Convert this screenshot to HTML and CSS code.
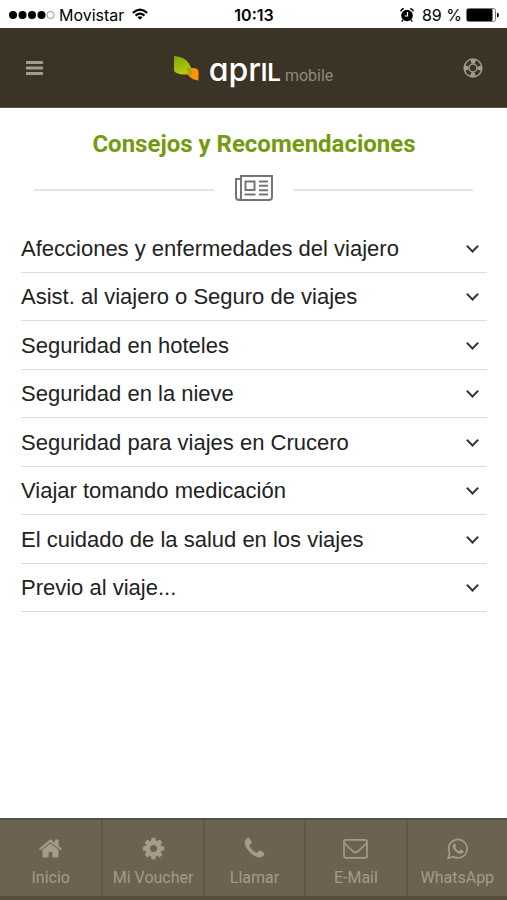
FILE: index.html
```html
<!DOCTYPE html>
<html lang="es">
<head>
    <meta charset="UTF-8">
    <meta name="viewport" content="width=device-width, initial-scale=1.0">
    <title>April mobile</title>
    <link rel="stylesheet" href="styles.css">
</head>
<body>
    <div class="status-bar">
        <div class="status-left">
            <svg class="signal" width="46" height="10" viewBox="0 0 46 10">
                <circle cx="4" cy="5" r="4"/>
                <circle cx="13.5" cy="5" r="4"/>
                <circle cx="23" cy="5" r="4"/>
                <circle cx="32.5" cy="5" r="4"/>
                <circle cx="41.5" cy="5" r="3.6" fill="none" stroke="#888" stroke-width="0.9"/>
            </svg>
            <span>Movistar</span>
            <svg class="wifi" width="16" height="13" viewBox="0 0 18 14" fill="none" stroke="#000" stroke-width="2.4">
                <path d="M1 5.2Q9-2.2 17 5.2M4 8.3Q9 3.8 14 8.3"/>
                <path d="M9 13L6.2 10.2Q9 8 11.8 10.2z" fill="#000" stroke="none"/>
            </svg>
        </div>
        <div class="status-time">10:13</div>
        <div class="status-right">
            <svg width="14" height="14" viewBox="0 0 14 14">
                <circle cx="7" cy="7.5" r="5.8"/>
                <path d="M.8 3.5Q1.2 1 3.8.8M10.2.8Q12.8 1 13.2 3.5M3 12l-1.2 1.5M11 12l1.2 1.5" fill="none" stroke="#000" stroke-width="1.4"/>
                <path d="M7.5 4v4H4.6" fill="none" stroke="#fff" stroke-width="1.2"/>
            </svg>
            <span class="battery-text">89 %</span>
            <svg width="33" height="14" viewBox="0 0 33 14">
                <rect x=".5" y=".5" width="29" height="13" rx="2" fill="#fff" stroke="#777"/>
                <rect x="1" y="1" width="25.5" height="12" rx="1"/>
                <path d="M31 4.5q2 .5 2 2.5t-2 2.5z"/>
            </svg>
        </div>
    </div>

    <header class="header">
        <button class="icon-button" type="button" aria-label="Menú">
            <svg width="18" height="16" viewBox="0 0 18 16" fill="currentColor">
                <rect x="0" y="1" width="17" height="3" rx=".5"/>
                <rect x="0" y="6.5" width="17" height="3" rx=".5"/>
                <rect x="0" y="12" width="17" height="3" rx=".5"/>
            </svg>
        </button>
        <a class="logo" href="#">
            <svg class="logo-leaves" width="25" height="26" viewBox="0 0 25 26">
                <defs>
                    <linearGradient id="leaf" x1="0" y1="0" x2="0.3" y2="1">
                        <stop offset="0" stop-color="#79a80b"/>
                        <stop offset="1" stop-color="#b4cc0b"/>
                    </linearGradient>
                </defs>
                <path d="M0 0Q15 1 17.5 14l-1.5 4.5H8Q0 17 0 14z" fill="url(#leaf)"/>
                <path d="M24.5 24.5V15q-1-3-5-3h-7q0 11 12 12.5z" fill="#f7930d"/>
                <path d="M12.5 12h4q3 4 .5 7.5Q13 17 12.5 12z" fill="#a9a508"/>
            </svg>
            <span class="logo-name">apr<span class="logo-caps">il</span></span>
            <span class="logo-mobile">mobile</span>
        </a>
        <button class="icon-button" type="button" aria-label="Ayuda">
            <svg width="20" height="20" viewBox="0 0 20 20" fill="none" stroke="currentColor">
                <circle cx="10" cy="10" r="8.9" stroke-width="1.5"/>
                <circle cx="10" cy="10" r="4" stroke-width="1.5"/>
                <circle cx="10" cy="10" r="6.6" stroke-width="4" stroke-dasharray="4.4 5.967" stroke-dashoffset="2.2"/>
            </svg>
        </button>
    </header>

    <main class="content">
        <h1 class="title">Consejos y Recomendaciones</h1>
        <div class="divider">
            <svg width="38" height="26" viewBox="0 0 38 26" fill="none" stroke="#757575" stroke-width="2">
                <path d="M6 1h31v21q0 3-3 3H4q-3 0-3-3V4h5zM6 4v18q0 3-2 3"/>
                <path d="M10.5 6.5h9v8.5h-9zM9.5 19.5h11M24 6.5h9M24 10.8h9M24 15.2h9M24 19.5h9"/>
            </svg>
        </div>

        <ul class="topics">
            <li><button class="topic" type="button">Afecciones y enfermedades del viajero</button></li>
            <li><button class="topic" type="button">Asist. al viajero o Seguro de viajes</button></li>
            <li><button class="topic" type="button">Seguridad en hoteles</button></li>
            <li><button class="topic" type="button">Seguridad en la nieve</button></li>
            <li><button class="topic" type="button">Seguridad para viajes en Crucero</button></li>
            <li><button class="topic" type="button">Viajar tomando medicación</button></li>
            <li><button class="topic" type="button">El cuidado de la salud en los viajes</button></li>
            <li><button class="topic" type="button">Previo al viaje...</button></li>
        </ul>
    </main>

    <nav class="tabs">
        <a class="tab" href="#">
            <svg width="25" height="25" viewBox="0 0 1792 1792" fill="currentColor"><path d="M1472 992v480q0 26-19 45t-45 19h-384v-384h-256v384h-384q-26 0-45-19t-19-45v-480q0-1 .5-3t.5-3l575-474 575 474q1 2 1 6zm223-69l-62 74q-8 9-21 11h-3q-13 0-21-7l-692-577-692 577q-12 8-24 7-13-2-21-11l-62-74q-8-10-7-23.5t11-21.5l719-599q32-26 76-26t76 26l244 204v-195q0-14 9-23t23-9h192q14 0 23 9t9 23v408l219 182q10 8 11 21.5t-7 23.5z"/></svg>
            <span>Inicio</span>
        </a>
        <a class="tab" href="#">
            <svg width="25" height="25" viewBox="0 0 1792 1792" fill="currentColor"><path d="M1152 896q0-106-75-181t-181-75-181 75-75 181 75 181 181 75 181-75 75-181zm512-109v222q0 12-8 23t-20 13l-185 28q-19 54-39 91 35 50 107 138 10 12 10 25t-9 23q-27 37-99 108t-94 71q-12 0-26-9l-138-108q-44 23-91 38-16 136-29 186-7 28-36 28h-222q-14 0-24.5-8.5t-11.5-21.5l-28-184q-49-16-90-37l-141 107q-10 9-25 9-14 0-25-11-126-114-165-168-7-10-7-23 0-12 8-23 15-21 51-66.5t54-70.5q-27-50-41-99l-183-27q-13-2-21-12.5t-8-23.5v-222q0-12 8-23t19-13l186-28q14-46 39-92-40-57-107-138-10-12-10-24 0-10 9-23 26-36 98.5-107.5t94.5-71.5q13 0 26 10l138 107q44-23 91-38 16-136 29-186 7-28 36-28h222q14 0 24.5 8.5t11.5 21.5l28 184q49 16 90 37l142-107q9-9 24-9 13 0 25 10 129 119 165 170 7 8 7 22 0 12-8 23-15 21-51 66.5t-54 70.5q26 50 41 98l183 28q13 2 21 12.5t8 23.5z"/></svg>
            <span>Mi Voucher</span>
        </a>
        <a class="tab" href="#">
            <svg width="25" height="25" viewBox="0 0 1792 1792" fill="currentColor"><path d="M1600 1240q0 27-10 70.5t-21 68.5q-21 50-122 106-94 51-186 51-27 0-53-3.5t-57.5-12.5-47-14.5-55.5-20.5-49-18q-98-35-175-83-127-79-264-216t-216-264q-48-77-83-175-3-9-18-49t-20.5-55.5-14.5-47-12.5-57.5-3.5-53q0-92 51-186 56-101 106-122 25-11 68.5-21t70.5-10q14 0 21 3 18 6 53 76 11 19 30 54t35 63.5 31 53.5q3 4 17.5 25t21.5 35.5 7 28.5q0 20-28.5 50t-62 55-62 53-28.5 46q0 9 5 22.5t8.5 20.5 14 24 11.5 19q76 137 174 235t235 174q2 1 19 11.5t24 14 20.5 8.5 22.5 5q18 0 46-28.5t53-62 55-62 50-28.5q14 0 28.5 7t35.5 21.5 25 17.5q25 15 53.5 31t63.5 35 54 30q70 35 76 53 3 7 3 21z"/></svg>
            <span>Llamar</span>
        </a>
        <a class="tab" href="#">
            <svg width="25" height="25" viewBox="0 0 25 25" fill="none" stroke="currentColor" stroke-width="1.7">
                <rect x="1" y="3.8" width="23" height="18" rx="1.8"/>
                <path d="M1.2 7Q3 9 10 15.3q2.5 2 5 0Q22 9 23.8 7"/>
            </svg>
            <span>E-Mail</span>
        </a>
        <a class="tab" href="#">
            <svg width="25" height="25" viewBox="0 0 25 25" fill="none" stroke="currentColor" stroke-width="1.7">
                <path d="M3.2 22.2l1.5-5.3a9.2 9.2 0 1 1 3.7 3.8z"/>
                <path d="M9.3 7.6q.7-.2 1 .5l.8 1.9q.2.5-.9 1.7 1.3 2.4 3.6 3.4.6.2 1.5-1.2.4-.5 1-.2l2 1q.5.4.1 1.4-.8 1.9-3 1.8-3.2-.3-6.1-3.8Q5.9 9.7 9.3 7.6z" fill="currentColor" stroke="none"/>
            </svg>
            <span>WhatsApp</span>
        </a>
    </nav>
</body>
</html>
```
FILE: styles.css
```css
* {
    box-sizing: border-box;
}

body {
    margin: 0;
    min-height: 100vh;
    display: flex;
    flex-direction: column;
    background: #fff;
    color: #222;
    font-family: Roboto, sans-serif;
}

button {
    border: 0;
    padding: 0;
    background: none;
    cursor: pointer;
}

a {
    text-decoration: none;
}

svg {
    display: block;
    flex: none;
}

/* status bar */
.status-bar {
    display: grid;
    grid-template-columns: 1fr auto 1fr;
    align-items: center;
    height: 28px;
    padding: 2px 8px 0 9px;
    color: #000;
    font-family: Inter, sans-serif;
    font-size: 16px;
}

.status-left,
.status-right {
    display: flex;
    align-items: center;
    gap: 4px;
}

.wifi {
    margin: 0 0 2px 4px;
}

.status-time {
    font-weight: 600;
}

.status-right {
    justify-content: flex-end;
}

.battery-text {
    margin-left: 4px;
}

/* header */
.header {
    display: flex;
    align-items: center;
    justify-content: space-between;
    height: 80px;
    padding: 1px 24px 0 26px;
    background: #3b3426;
    border-bottom: 1px solid #5a5446;
}

.icon-button {
    color: #a39c8a;
}

.logo {
    display: flex;
    align-items: baseline;
    gap: 4px;
    padding-top: 6px;
    color: #fff;
}

.logo-leaves {
    align-self: flex-start;
    margin: 5px 6px 0 0;
}

.logo-name {
    font-family: Inter, sans-serif;
    font-size: 32px;
    line-height: 38px;
    font-weight: 500;
    font-feature-settings: "cv11"; /* round a */
}

.logo-caps {
    font-size: 24px;
    font-weight: 600;
    text-transform: uppercase;
}

.logo-mobile {
    color: #8f8878;
    font-size: 16px;
}

/* content */
.content {
    flex: 1;
    padding: 20px 20px 24px 21px;
}

.title {
    margin: 0;
    color: #76990f;
    font-size: 24px;
    line-height: 32px;
    font-weight: 700;
    text-align: center;
}

.divider {
    display: flex;
    align-items: center;
    gap: 21px;
    margin: 15px 14px 23px 13px;
}

.divider::before,
.divider::after {
    content: "";
    flex: 1;
    height: 2px;
    margin-top: 4px;
    background: #e3e3e3;
}

.topics {
    display: grid;
    grid-auto-rows: 1fr;
    min-height: 388px;
    margin: 0;
    padding: 0;
    list-style: none;
}

.topics li {
    display: flex;
    border-bottom: 1px solid #dedede;
}

.topic {
    display: flex;
    align-items: center;
    justify-content: space-between;
    width: 100%;
    padding: 2px 10px 0 0;
    color: #222;
    font-family: "Liberation Sans", sans-serif;
    font-size: 22px;
    text-align: left;
}

.topic::after {
    content: "";
    width: 7px;
    height: 7px;
    margin-bottom: 5px;
    border-right: 2px solid #333;
    border-bottom: 2px solid #333;
    transform: rotate(45deg);
}

/* bottom tabs */
.tabs {
    display: grid;
    grid-template-columns: repeat(5, 1fr);
    background: #6b624f;
    border-top: 2px solid #595140;
    border-bottom: 4px solid #574e3d;
}

.tab {
    display: flex;
    flex-direction: column;
    align-items: center;
    gap: 7px;
    padding: 16px 0 8px;
    border-left: 2px solid #5e5543;
    color: #a39c88;
    font-size: 16px;
    line-height: 20px;
}

.tab:first-child {
    border-left: 0;
}
```
